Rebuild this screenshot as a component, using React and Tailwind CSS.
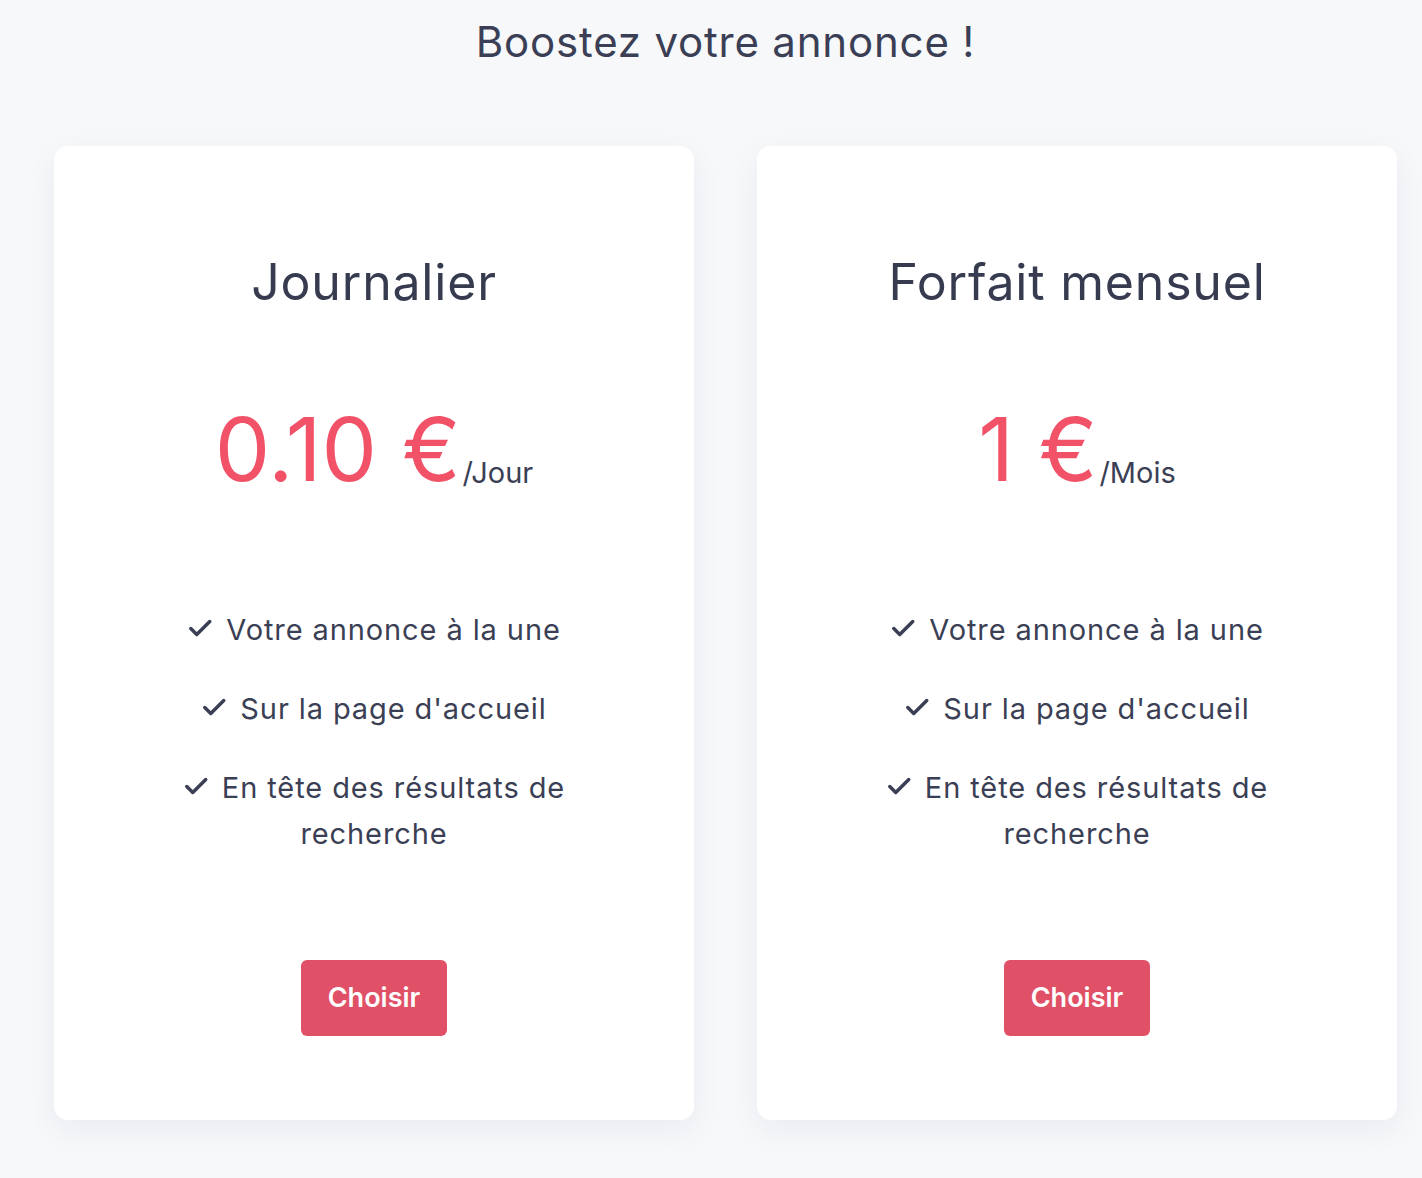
import React from 'react';

const PLANS = [
  { id: 'day', title: 'Journalier', price: '0.10 €', unit: '/Jour' },
  { id: 'month', title: 'Forfait mensuel', price: '1 €', unit: '/Mois' },
];

const FEATURES = [
  'Votre annonce à la une',
  "Sur la page d'accueil",
  'En tête des résultats de recherche',
];

function Check() {
  return (
    <svg width="26" height="26" viewBox="0 0 24 24" fill="none" stroke="currentColor" strokeWidth="3.2" strokeLinecap="round" strokeLinejoin="round" className="inline-block mr-[13px] -mt-2 align-middle">
      <path d="M3.5 12.5l5.5 5.5L21 6" />
    </svg>
  );
}

function PlanCard({ plan }) {
  return (
    <div className="w-[640px] h-[974px] bg-white rounded-[14px] shadow-[0_10px_30px_rgba(30,40,70,0.06)] flex flex-col items-center pt-[98px]">
      <h2 className="text-[50px] leading-[76px] text-[#373b50] tracking-[0.8px]">{plan.title}</h2>
      <div className="mt-[79px] flex items-end text-[#f25268]">
        <span className="text-[88px] leading-[100px]">{plan.price}</span>
        <span className="text-[29px] leading-[40px] text-[#3b3f55] mb-[6px] ml-[2px]">{plan.unit}</span>
      </div>
      <ul className="mt-[108px] w-[420px] flex flex-col gap-[33px] text-center text-[29px] leading-[46px] text-[#3b3f55] tracking-[0.9px]">
        {FEATURES.map((f) => (
          <li key={f}>
            <Check />
            {f}
          </li>
        ))}
      </ul>
      <button className="mt-[103px] w-[146px] h-[76px] rounded-[6px] bg-[#e05067] text-white text-[27px] font-semibold">
        Choisir
      </button>
    </div>
  );
}

export default function App() {
  return (
    <div className="min-h-screen bg-[#f7f8fa] pl-[54px] pb-[58px]" style={{ fontFamily: 'Inter, "Noto Sans", sans-serif' }}>
      <h1 className="w-[1343px] text-center pt-[14px] text-[42px] leading-[56px] text-[#3b3f55] tracking-[0.8px]">
        Boostez votre annonce !
      </h1>
      <div className="mt-[76px] flex gap-[63px]">
        {PLANS.map((p) => (
          <PlanCard key={p.id} plan={p} />
        ))}
      </div>
    </div>
  );
}
